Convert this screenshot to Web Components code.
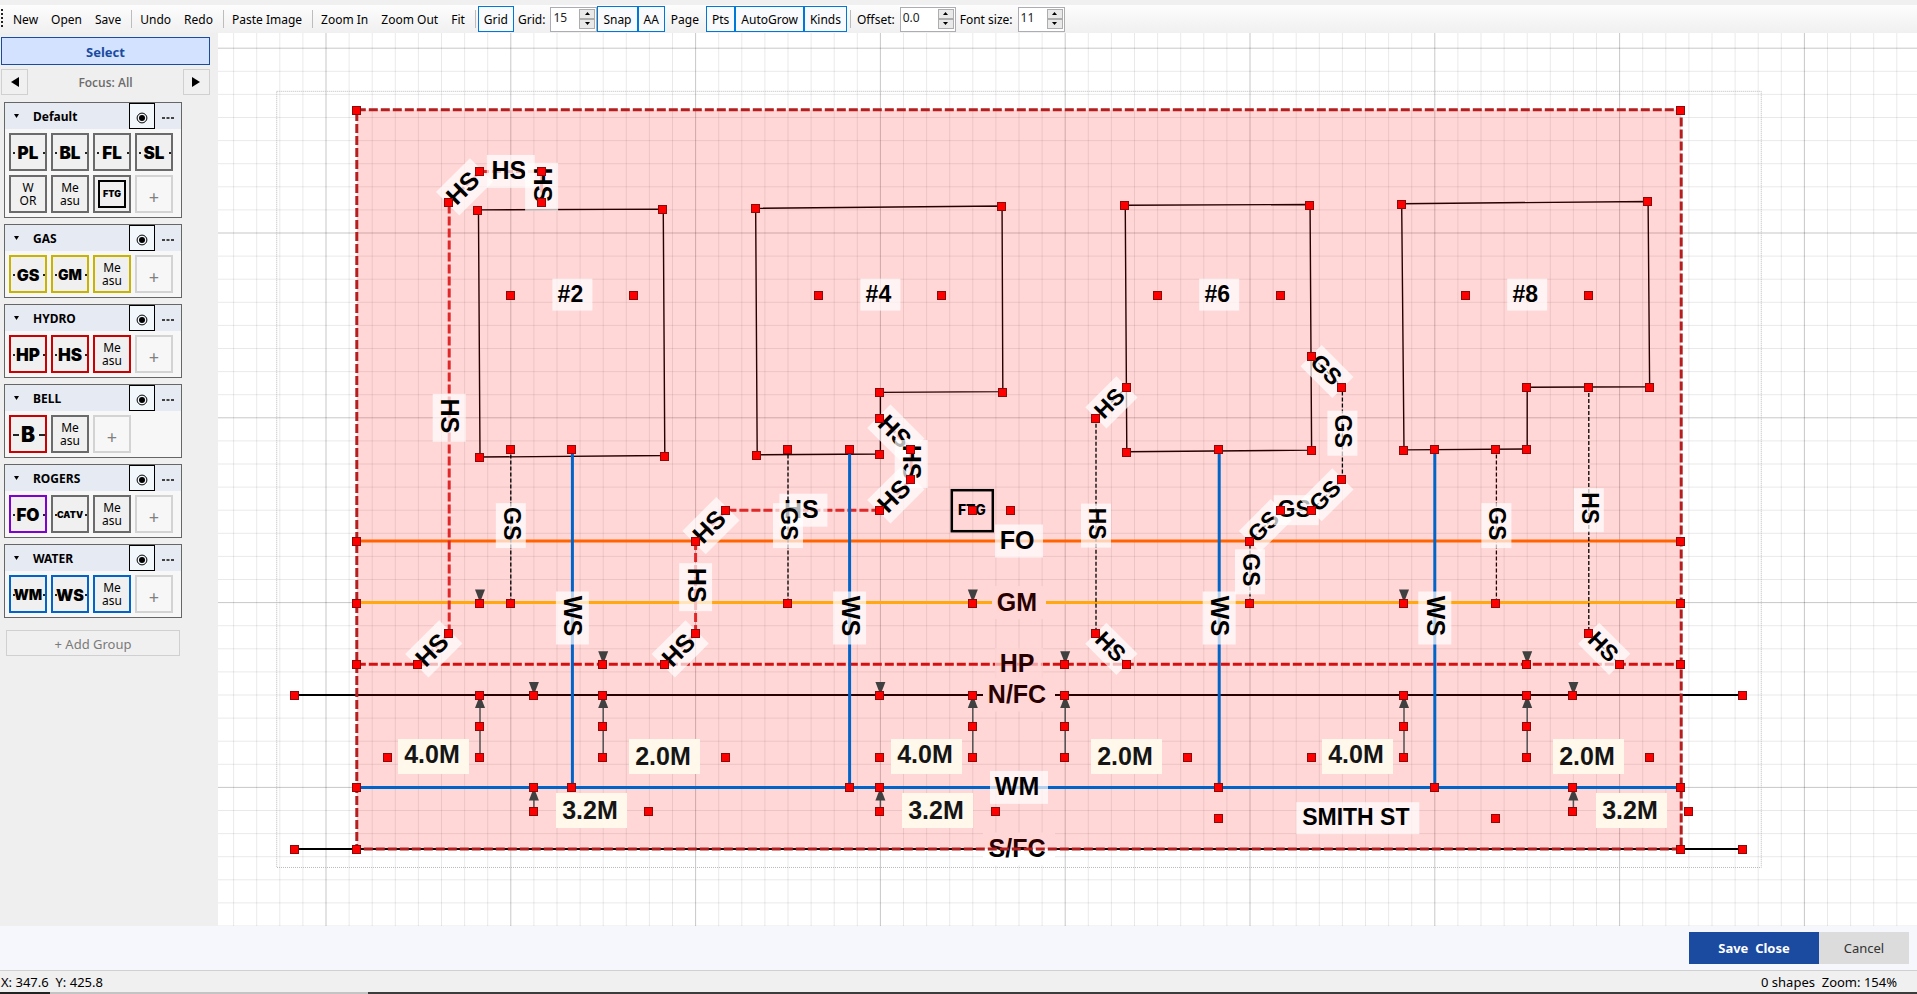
<!DOCTYPE html>
<html lang="en">
<head>
<meta charset="utf-8">
<title>Site plan editor</title>
<style>
html,body{margin:0;height:100%}
body{font:12px/16px "Noto Sans","Open Sans",sans-serif;color:#000;background:#f0f0f0}
</style>
</head>
<body>
<plan-app></plan-app>
<script>
function define(name, html, setup){
  const t=document.createElement('template');
  t.innerHTML=html;
  customElements.define(name, class extends HTMLElement{
    constructor(){
      super();
      this.attachShadow({mode:'open'}).append(t.content.cloneNode(true));
    }
    connectedCallback(){ if(setup&&!this.ready){this.ready=true;setup(this,this.shadowRoot);} }
  });
}

/* ---------- toolbar ---------- */
define('tool-button',`<style>
:host{display:block}
button{font:inherit;color:inherit;height:26px;padding:2px 6px 0 5px;border:1px solid transparent;background:none;display:block;white-space:nowrap}
:host([on]) button{border-color:#0078d7;background:#f8fafd;padding-right:5px}
</style><button type="button"><slot></slot></button>`,(h,r)=>{
  if(h.hasAttribute('on')) r.querySelector('button').setAttribute('aria-pressed','true');
});
define('tool-sep',`<style>:host{display:block;width:1px;height:18px;background:#bdbdbd;margin:0 2px 0 3px}</style>`);
define('num-spin',`<style>
:host{display:flex;align-items:center;gap:5px;padding-left:4px}
label{padding-top:2px}
.box{display:flex;box-sizing:border-box;width:var(--w,47px);height:25px;border:1px solid #abadb3;background:#fff}
input{flex:1;min-width:0;border:0;padding:0 0 3px 2px;font:inherit;background:none;outline:0;color:#222}
.keys{display:flex;flex-direction:column;width:16px;padding:1px 1px 0 0}
button{height:10px;padding:0;border:1px solid #adadad;background:#e9e9e9;display:grid;place-items:center}
svg{display:block}
</style><label for="v"><slot></slot></label><div class="box"><input id="v" type="text"><div class="keys">
<button type="button" aria-label="Increase"><svg width="5" height="3"><path d="M0 3L2.500 0L5 3z"/></svg></button>
<button type="button" aria-label="Decrease"><svg width="5" height="3"><path d="M0 0L2.500 3L5 0z"/></svg></button></div></div>`,(h,r)=>{
  r.querySelector('input').value=h.getAttribute('value');
});
define('tool-bar',`<style>
:host{display:flex;align-items:center;height:28px;padding-left:1px;background:linear-gradient(#fdfdfd,#f0f0f0)}
.grip{width:2px;height:20px;margin-right:4px;background:repeating-linear-gradient(#222 0 2px,transparent 2px 4px)}
.wide{--w:56px}
</style><div class="grip"></div>
<tool-button>New</tool-button><tool-button>Open</tool-button><tool-button>Save</tool-button><tool-sep></tool-sep>
<tool-button>Undo</tool-button><tool-button>Redo</tool-button><tool-sep></tool-sep>
<tool-button>Paste Image</tool-button><tool-sep></tool-sep>
<tool-button>Zoom In</tool-button><tool-button>Zoom Out</tool-button><tool-button>Fit</tool-button><tool-sep></tool-sep>
<tool-button on>Grid</tool-button><num-spin value="15">Grid:</num-spin>
<tool-button on>Snap</tool-button><tool-button on>AA</tool-button><tool-button>Page</tool-button>
<tool-button on>Pts</tool-button><tool-button on>AutoGrow</tool-button><tool-button on>Kinds</tool-button><tool-sep></tool-sep>
<num-spin class="wide" value="0.0">Offset:</num-spin><num-spin value="11">Font size:</num-spin>`);

/* ---------- side panel ---------- */
define('kind-tile',`<style>
:host{display:block;--c:#6b6b6b}
button{position:relative;box-sizing:border-box;width:38px;height:38px;padding:0;border:2px solid var(--c);background:#f0f0f0;color:#000;font:inherit;line-height:13px;display:grid;place-items:center}
:host([mode=line]) button{font:900 var(--s,17px)/20px Inter,"Liberation Sans",sans-serif;padding-top:2px}
:host([mode=line]) button::before,:host([mode=line]) button::after{content:"";position:absolute;top:17px;width:var(--d,2px);height:2px;background:#222}
:host([mode=line]) button::before{left:2px}
:host([mode=line]) button::after{right:0}
:host([mode=words]) span{text-align:center;white-space:pre}
:host([mode=box]) span{box-sizing:border-box;width:28px;height:28px;border:2px solid #000;font:900 9px/24px Inter,"Liberation Sans",sans-serif}
:host([mode=add]) button{border-color:#d3d3d3;background:#f7f7f7;color:#808080;font-size:18px;line-height:32px;padding-top:4px}
</style><button type="button"><span><slot></slot></span></button>`);
define('group-card',`<style>
:host{display:block;border:1px solid #666;background:#f7f7f7}
header{display:flex;align-items:center;height:26px;background:#e6eaf3}
h2{flex:1;margin:0;padding-top:2px;font:700 12px/16px "Noto Sans",sans-serif}
button{font:inherit;border:0;background:none;padding:0;color:#000;display:grid;place-items:center;height:26px}
.fold{width:28px;padding-right:6px}
.eye{width:26px;border:1px solid #000;background:#f2f7fb;padding-top:3px}
.more{width:26px;padding-top:3px}
.tiles{display:grid;grid-template-columns:repeat(4,38px);gap:4px;padding:4px}
</style><header><button class="fold" type="button" aria-label="Collapse"><svg width="5" height="4"><path d="M0 0H5L2.500 4z"/></svg></button>
<h2></h2><button class="eye" type="button" aria-label="Visible"><svg width="12" height="12"><circle cx="6" cy="6" r="4.900" fill="none" stroke="#000"/><circle cx="6" cy="6" r="3"/></svg></button>
<button class="more" type="button" aria-label="More"><svg width="12" height="2" fill="#444"><path d="M0 0h3v2H0zM4.500 0h3v2h-3zM9 0h3v2H9z"/></svg></button></header>
<div class="tiles"><slot></slot></div>`,(h,r)=>{ r.querySelector('h2').textContent=h.getAttribute('name'); });

const GROUPS=[
 ['Default','#6b6b6b',['PL','BL','FL','SL','W\nOR','Me\nasu','[FTG]']],
 ['GAS','#c8b400',['GS:16','GM:14','Me\nasu']],
 ['HYDRO','#cc0000',['HP','HS','Me\nasu']],
 ['BELL','#6b6b6b',['B:21:#cc0000','Me\nasu']],
 ['ROGERS','#6b6b6b',['FO:17:#8000d0','CATV:9','Me\nasu']],
 ['WATER','#0064c8',['WM:14','WS:16','Me\nasu']]
];
define('side-panel',`<style>
:host{display:block;box-sizing:border-box;width:218px;background:#efefef;padding:4px 8px 0 1px}
button{font:inherit;box-sizing:border-box}
.select{display:block;width:100%;height:28px;padding-top:3px;border:1px solid #1a4ba0;background:#d3e3ff;color:#1a4ba0;font:700 13px/16px "Noto Sans",sans-serif}
.focus{display:flex;justify-content:space-between;align-items:center;margin:4px 0 7px;color:#6b6b6b;font-weight:600}
.focus span{padding-top:2px;font-family:"Open Sans",sans-serif}
.focus button{width:27px;height:26px;border:1px solid #d0d0d0;background:#f0f0f0;display:grid;place-items:center;padding:0}
.groups{display:flex;flex-direction:column;gap:6px;width:178px;padding-left:3px}
.add{height:26px;margin:6px 2px 0;padding-top:3px;border:1px solid #d0d0d0;background:#f0f0f0;color:#7a7a7a;font-size:13px}
</style><button class="select" type="button">Select</button>
<div class="focus"><button type="button" aria-label="Previous"><svg width="8" height="10"><path d="M8 0V10L0 5z"/></svg></button><span>Focus: All</span><button type="button" aria-label="Next"><svg width="8" height="10"><path d="M0 0V10L8 5z"/></svg></button></div>
<div class="groups"><button class="add" type="button">+ Add Group</button></div>`,(h,r)=>{
  const add=r.querySelector('.add');
  for(const [name,color,kinds] of GROUPS){
    const g=document.createElement('group-card');
    g.setAttribute('name',name);
    for(const k of [...kinds,'+']){
      const t=document.createElement('kind-tile');
      let [text,size,own]=k.split(':'), mode='line';
      if(k==='+') mode='add';
      else if(k[0]==='['){mode='box';text=k.slice(1,-1);}
      else if(k.includes('\n')) mode='words';
      t.setAttribute('mode',mode);
      t.style.setProperty('--c',own||color);
      if(size) t.style.setProperty('--s',size+'px');
      if(text==='B') t.style.setProperty('--d','6px');
      t.textContent=text;
      g.append(t);
    }
    add.before(g);
  }
});

/* ---------- drawing ---------- */
const Z=1.54, X=w=>+(w*Z).toFixed(2), P=(p)=>X(p[0])+' '+X(p[1]);
const HANDLES=[];
function line(pts,style,close){
  HANDLES.push(...pts);
  return `<path d="M${pts.map(P).join('L')}${close?'z':''}" ${style}/>`;
}
function tag(x,y,text,w,h,size,angle,o={}){
  return `<g transform="translate(${X(x)} ${X(y)}) rotate(${angle||0})"><rect x="${-w/2}" y="${-h/2}" width="${w}" height="${h}" fill="${o.bg||'#fff'}" fill-opacity="${o.op||.7}"/><text x="-2" y="${o.dy||Math.round(size*.36)-1}" font-size="${size}" text-anchor="middle" fill="${o.fg||'#000'}">${text}</text></g>`;
}
/* a chain of points: every segment drawn, each with its own label turned along it */
function chain(pts,text,style,w,h,size){
  let out='';
  for(let i=1;i<pts.length;i++){
    const [a,b]=[pts[i-1],pts[i]];
    let ang=Math.atan2(b[1]-a[1],b[0]-a[0])*180/Math.PI;
    if(ang>90) ang-=180; if(ang<=-90) ang+=180;
    out+=line([a,b],style)+tag((a[0]+b[0])/2,(a[1]+b[1])/2,text,w,h,size,ang);
  }
  return out;
}
function arrow(x,y,dir){
  return `<path d="M${X(x)} ${X(y)}l-5 ${13*dir}h10z" fill="#404040"/>`;
}
function dimension(x,top,base,foot,others,box,text,dy){
  HANDLES.push([x,top],[x,base],[x,foot],...others);
  return `<path d="M${X(x)} ${X(base)}V${X(foot)}" stroke="#505050" stroke-width="1.500"/>`+
    arrow(x,top,-1)+arrow(x,base,1)+
    `<g transform="translate(${box})"><rect width="71" height="35" fill="#fff8eb"/><text x="34" y="${dy}" font-size="25" text-anchor="middle" fill="#151515">${text}</text></g>`;
}
function drawing(){
  let minor='',major='';
  for(let i=-20;i<200;i++){
    const d=`M${X(i*15)} -900V2500M-900 ${X(i*15)}H5000`;
    if(i%8) minor+=d; else major+=d;
  }
  const thick='fill="none" stroke-width="3"', red=`${thick} stroke="#e02828" stroke-dasharray="9 3"`,
    thin='fill="none" stroke="#000" stroke-width="1.300" stroke-dasharray="4 2"',
    house='fill="none" stroke="#000" stroke-width="1.400"', blue=`${thick} stroke="#0064c8"`;
  let s=`<path d="${minor}" stroke="#000" stroke-opacity=".085"/><path d="${major}" stroke="#000" stroke-opacity=".22"/>`;
  s+=`<rect x="${X(-32)}" y="${X(-92)}" width="${X(964)}" height="${X(504)}" fill="none" stroke="#bbb" stroke-dasharray="1 1"/>`;
  for(const [y,name] of [[300,'N/FC'],[400,'S/FC']])
    s+=line([[-20,y],[920,y]],'stroke="#000" stroke-width="2"')+tag(450,y,name,72,33,25,0,{op:1});
  s+=line([[20,240],[880,240]],`${thick} stroke="#ffc814"`)+tag(450,240,'GM',54,33,25,0,{op:1});
  s+=line([[20,280],[880,280]],`${thick} stroke="#cc1414" stroke-dasharray="9 3"`)+tag(450,280,'HP',48,33,25);
  s+=line([[99,-15],[219,-15.5],[220,144.5],[100,145.500]],house,1);
  s+=line([[279,-16],[439,-17.500],[439.500,103],[360,103.500],[360,143.500],[280,144]],house,1);
  s+=line([[519,-18],[639,-18.500],[640,141],[520,142]],house,1);
  s+=line([[698.500,-19],[858.500,-20.500],[859.500,99.800],[780,100.200],[780,140.300],[700,140.800]],house,1);
  s+=line([[760,140],[760,240]],thin);
  s+=`<rect x="${X(20)}" y="${X(-80)}" width="${X(860)}" height="${X(480)}" fill="#ff0000" fill-opacity=".155"/>`;
  s+=line([[20,-80],[880,-80],[880,400],[20,400]],`${thick} stroke="#b41e1e" stroke-dasharray="9 3"`,1);
  s+=line([[20,200],[880,200]],`${thick} stroke="#ff6400"`)+tag(450,200,'FO',48,33,25);
  s+=line([[20,360],[880,360]],blue)+tag(450,360,'WM',58,33,25);
  s+=chain([[60,280],[80,260],[80,-20],[100,-40],[140,-40],[140,-20]],'HS',red,48,33,25);
  s+=chain([[360,120],[380,140],[380,160],[360,180],[260,180],[240,200],[240,260],[220,280]],'HS',red,48,33,25);
  for(const x of [160,340,580,720]) s+=chain([[x,140],[x,360]],'WS',blue,53,33,25);
  for(const x of [120,300]) s+=chain([[x,140],[x,240]],'GS',thin,45,30,23);
  s+=tag(760,190,'GS',45,30,23,90);
  s+=chain([[520,100],[500,120],[500,260],[520,280]],'HS',thin,44,30,23);
  s+=chain([[600,240],[600,200],[620,180],[640,180],[660,160],[660,100],[640,80]],'GS',thin,45,30,23);
  s+=chain([[820,100],[820,260],[840,280]],'HS',thin,44,30,23);
  for(const [x,a,b,n] of [[160,120,200,'#2'],[360,320,400,'#4'],[580,540,620,'#6'],[780,740,820,'#8']]){
    s+=tag(x,40,n,40,32,23); HANDLES.push([a,40],[b,40]);
  }
  s+=tag(670,380,'SMITH ST',123,32,23); HANDLES.push([580,380],[760,380]);
  s+=`<g transform="translate(${P([420,180])})"><rect x="-21" y="-20" width="41" height="41" fill="none" stroke="#000" stroke-width="2.500"/><text y="5" x="-1" font-family="Inter" font-weight="800" font-size="14" text-anchor="middle">FTG</text></g>`;
  HANDLES.push([420,180],[445,180]);
  for(const [x,left,hx] of [[100,72,40],[420,565,360],[700,996,640]])
    s+=dimension(x,240,300,340,[[x,320],[hx,340]],`${left} 506`,'4.0M',24);
  for(const [x,left,hx] of [[180,303,260],[480,765,560],[780,1227,860]])
    s+=dimension(x,280,300,340,[[x,320],[hx,340]],`${left} 506`,'2.0M',26);
  for(const [x,left,hx] of [[135,230,210],[360,576,435],[810,1270,885]])
    s+=dimension(x,300,360,375,[[hx,375]],`${left} 560`,'3.2M',26);
  const seen=new Set();
  for(const p of HANDLES){
    const k=P(p); if(seen.has(k)) continue; seen.add(k);
    s+=`<rect x="${Math.round(X(p[0]))-4.5}" y="${Math.round(X(p[1]))-3.5}" width="8" height="8" fill="#f00" stroke="#8c0a0a"/>`;
  }
  return s;
}
define('plan-canvas',`<style>
:host{display:block;min-width:0;background:#fff;overflow:hidden}
svg{display:block;width:100%;height:100%;font:700 25px "Liberation Sans",Arial,sans-serif}
</style><svg role="img" aria-label="Site plan of Smith St"></svg>`,(h,r)=>{
  r.querySelector('svg').innerHTML=`<g transform="translate(108 200)">${drawing()}</g>`;
});

/* ---------- bottom bars ---------- */
define('action-bar',`<style>
:host{display:flex;justify-content:flex-end;align-items:center;height:44px;padding-right:8px;background:#f5f7fc}
button{height:32px;border:0;font:13px/16px "Noto Sans",sans-serif;background:#dcdcdc;color:#333;width:90px;white-space:pre}
.save{width:130px;background:#1a4ba0;color:#fff;font-weight:700}
</style><button class="save" type="button">Save  Close</button><button type="button">Cancel</button>`);
define('status-bar',`<style>
:host{display:block;border-top:1px solid #d0d0d0;background:#f0f0f0;white-space:pre;font-size:13px}
.row{display:flex;justify-content:space-between;height:21px;line-height:23px;padding:0 20px 0 1px}
.edge{height:2px;background:linear-gradient(90deg,#222 50px,#c4c4c4 50px 368px,#3c3c3c 368px)}
</style><div class="row"><span>X: 347.6  Y: 425.8</span><span>0 shapes  Zoom: 154%</span></div><div class="edge"></div>`);
define('plan-app',`<style>
:host{display:flex;flex-direction:column;height:100vh;overflow:hidden}
.strip{height:5px;background:#f0f0f0}
main{flex:1;min-height:0;display:grid;grid-template-columns:218px 1fr}
</style><div class="strip"></div><tool-bar></tool-bar><main><side-panel></side-panel><plan-canvas></plan-canvas></main><action-bar></action-bar><status-bar></status-bar>`);
</script>
</body>
</html>
